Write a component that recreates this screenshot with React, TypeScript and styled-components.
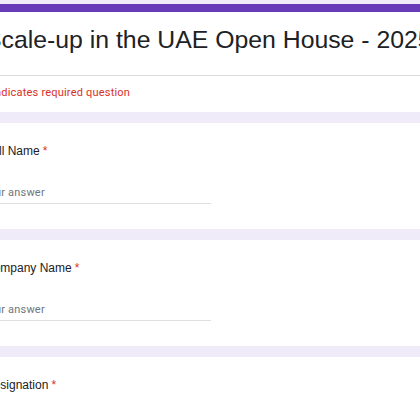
import React from "react";
import styled, { createGlobalStyle } from "styled-components";

const Global = createGlobalStyle`
  html, body {
    margin: 0;
    padding: 0;
    background: #f0ebf8;
    overflow: hidden;
  }
`;

const Page = styled.div`
  width: 500px;
  margin-left: -39px;
  padding-top: 4px;
  display: flex;
  flex-direction: column;
  gap: 11px;
`;

const Card = styled.section<{ $accent?: boolean }>`
  background: #ffffff;
  border-top: ${(p) => (p.$accent ? "8px solid #673ab7" : "none")};
  display: flex;
  flex-direction: column;
`;

const TitleBlock = styled.div`
  padding: 12px 24px 20px;
  border-bottom: 1px solid #dadce0;
`;

const FormTitle = styled.h1`
  margin: 0;
  font-family: "Liberation Sans", Arial, sans-serif;
  font-weight: 400;
  font-size: 24.8px;
  line-height: 31px;
  color: #202124;
  white-space: nowrap;
`;

const RequiredNote = styled.div`
  padding: 10px 24px 12px 23px;
  font-family: Roboto, "Liberation Sans", sans-serif;
  font-size: 11px;
  line-height: 14px;
  letter-spacing: 0.2px;
  color: #d93025;
`;

const Question = styled.div`
  padding: 20px 24px 25px;
  display: flex;
  flex-direction: column;
  gap: 26px;
`;

const QuestionTitle = styled.div`
  font-family: "Liberation Sans", Arial, sans-serif;
  font-size: 12px;
  line-height: 16px;
  color: #202124;
`;

const Star = styled.span`
  color: #d93025;
  margin-left: 3px;
`;

const Answer = styled.div`
  width: 229px;
  margin-left: -3px;
  padding-bottom: 2px;
  border-bottom: 1px solid #e0e0e0;
  font-family: Roboto, "Liberation Sans", sans-serif;
  font-size: 11px;
  line-height: 16px;
  letter-spacing: 0.2px;
  color: #70757a;
`;

const questions = ["Full Name", "Company Name", "Designation"];

export default function App() {
  return (
    <>
      <Global />
      <Page>
        <Card $accent>
          <TitleBlock>
            <FormTitle>Scale-up in the UAE Open House - 2025</FormTitle>
          </TitleBlock>
          <RequiredNote>* Indicates required question</RequiredNote>
        </Card>
        {questions.map((q) => (
          <Card key={q}>
            <Question>
              <QuestionTitle>
                {q}
                <Star>*</Star>
              </QuestionTitle>
              <Answer>Your answer</Answer>
            </Question>
          </Card>
        ))}
      </Page>
    </>
  );
}
